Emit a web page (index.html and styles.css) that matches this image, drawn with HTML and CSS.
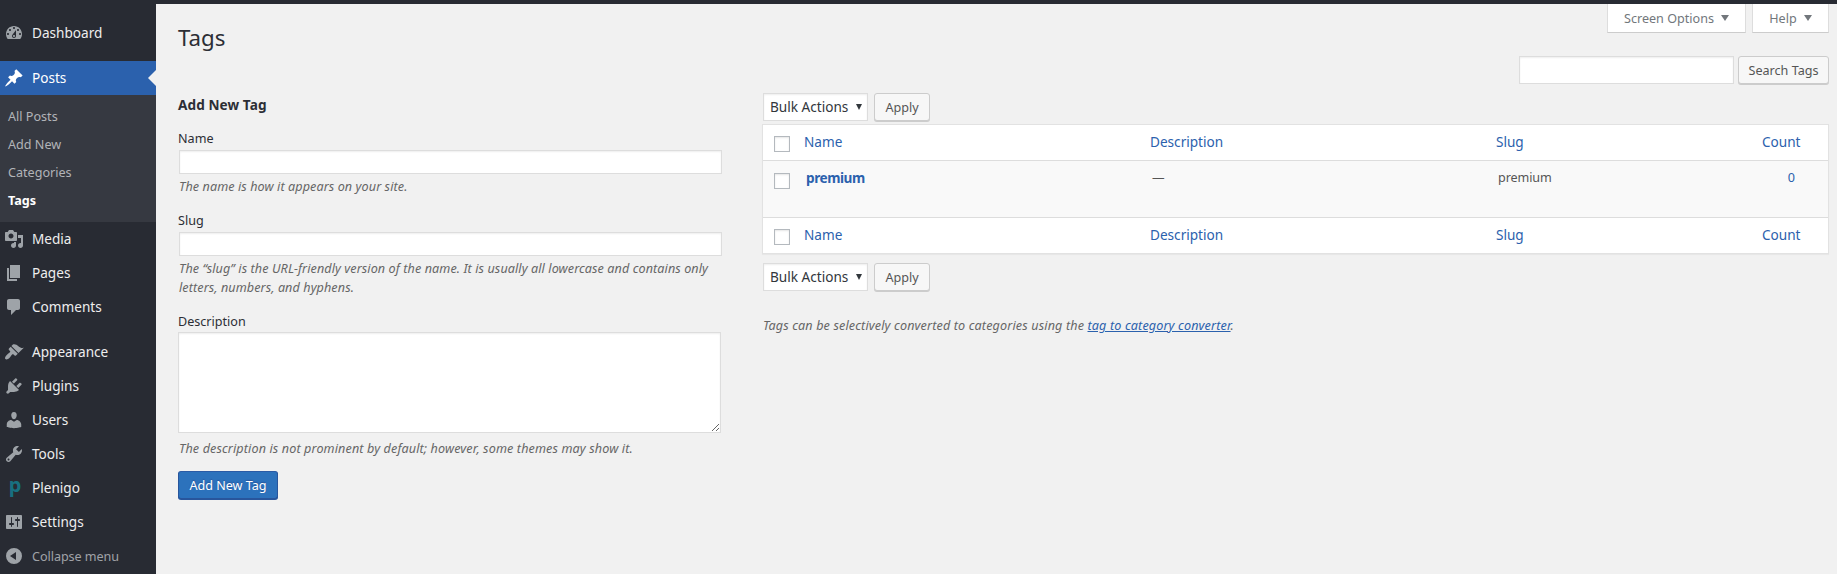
FILE: index.html
```
<!DOCTYPE html>
<html lang="en">
<head>
<meta charset="utf-8">
<title>Tags</title>
<link rel="stylesheet" href="styles.css">
</head>
<body>
<div class="topbar"></div>
<div class="layout">
  <nav class="menu">
    <a class="item"><svg class="icon" viewBox="0 0 20 20"><path d="M3.76 16h12.48c1.1-1.37 1.76-3.11 1.76-5 0-4.42-3.58-8-8-8s-8 3.58-8 8c0 1.89.66 3.63 1.76 5zM10 4c.55 0 1 .45 1 1s-.45 1-1 1-1-.45-1-1 .45-1 1-1zM6 6c.55 0 1 .45 1 1s-.45 1-1 1-1-.45-1-1 .45-1 1-1zm8 0c.55 0 1 .45 1 1s-.45 1-1 1-1-.45-1-1 .45-1 1-1zm-5.37 5.55L12 7v6c0 1.1-.9 2-2 2s-2-.9-2-2c0-.57.24-1.08.63-1.45zM4 10c.55 0 1 .45 1 1s-.45 1-1 1-1-.45-1-1 .45-1 1-1zm12 0c.55 0 1 .45 1 1s-.45 1-1 1-1-.45-1-1 .45-1 1-1zm-5 3c0-.55-.45-1-1-1s-1 .45-1 1 .45 1 1 1 1-.45 1-1z" fill-rule="evenodd"/></svg><span>Dashboard</span></a>
    <a class="item current gap"><svg class="icon" viewBox="0 0 20 20"><path d="M10.44 3.02l1.82-1.82 6.36 6.35-1.83 1.82c-1.05-.68-2.48-.57-3.41.36l-.75.75c-.92.93-1.04 2.35-.35 3.41l-1.83 1.82-2.41-2.41-2.8 2.79c-.42.42-3.38 2.71-3.8 2.29s1.86-3.39 2.28-3.81l2.79-2.79L4.1 9.36l1.83-1.82c1.05.69 2.48.57 3.4-.36l.75-.75c.93-.92 1.05-2.35.36-3.41z"/></svg><span>Posts</span></a>
    <div class="submenu">
      <a>All Posts</a><a>Add New</a><a>Categories</a><a class="active">Tags</a>
    </div>
    <a class="item"><svg class="icon" viewBox="0 0 20 20"><path d="M13 11V4c0-.55-.45-1-1-1h-1.67L9 1H5L3.67 3H2c-.55 0-1 .45-1 1v7c0 .55.45 1 1 1h10c.55 0 1-.45 1-1zM7 4.5c1.38 0 2.5 1.12 2.5 2.5S8.38 9.5 7 9.5 4.5 8.38 4.5 7 5.62 4.5 7 4.5zM14 6h5v10.5c0 1.38-1.12 2.5-2.5 2.5S14 17.88 14 16.5s1.12-2.5 2.5-2.5c.17 0 .34.02.5.05V9h-3V6zm-4 8.05V13h2v3.5c0 1.38-1.12 2.5-2.5 2.5S7 17.88 7 16.5 8.12 14 9.5 14c.17 0 .34.02.5.05z" fill-rule="evenodd"/></svg><span>Media</span></a>
    <a class="item"><svg class="icon" viewBox="0 0 20 20"><path d="M6 15V2h10v13H6zm-1 1h8v2H3V5h2v11z"/></svg><span>Pages</span></a>
    <a class="item"><svg class="icon" viewBox="0 0 20 20"><path d="M5 2h9c1.1 0 2 .9 2 2v7c0 1.1-.9 2-2 2h-2l-5 5v-5H5c-1.1 0-2-.9-2-2V4c0-1.1.9-2 2-2z"/></svg><span>Comments</span></a>
    <a class="item gap"><svg class="icon" viewBox="0 0 20 20"><path d="M14.48 11.06L7.41 3.99l1.5-1.5c.5-.56 2.3-.47 3.51.32 1.21.8 1.43 1.28 2.91 2.1 1.18.64 2.45 1.26 4.45.85zm-.71.71L6.7 4.7 4.93 6.47c-.39.39-.39 1.02 0 1.41l1.06 1.06c.39.39.39 1.03 0 1.42-.6.6-1.43 1.11-2.21 1.69-.35.26-.7.53-1.01.84C1.43 14.23.4 16.08 1.4 17.07c.99 1 2.84-.03 4.18-1.36.31-.31.58-.66.85-1.02.57-.78 1.08-1.61 1.69-2.21.39-.39 1.02-.39 1.41 0l1.06 1.06c.39.39 1.02.39 1.41 0z"/></svg><span>Appearance</span></a>
    <a class="item"><svg class="icon" viewBox="0 0 20 20"><path d="M13.11 4.36L9.87 7.6 8 5.73l3.24-3.24c.35-.34 1.05-.2 1.56.32.52.51.66 1.21.31 1.55zm-8 1.77l.91-1.12 9.01 9.01-1.19.84c-.71.71-2.63 1.16-3.82 1.16H6.14L4.9 17.26c-.59.59-1.54.59-2.12 0-.59-.58-.59-1.53 0-2.12l1.24-1.24v-3.88c0-1.13.4-3.19 1.09-3.89zm7.26 3.97l3.24-3.24c.34-.35 1.04-.21 1.55.31.52.51.66 1.21.31 1.55l-3.24 3.25z"/></svg><span>Plugins</span></a>
    <a class="item"><svg class="icon" viewBox="0 0 20 20"><path d="M10 9.25c-2.27 0-2.73-3.44-2.73-3.44C7 4.02 7.82 2 9.97 2c2.16 0 2.98 2.02 2.71 3.81 0 0-.41 3.44-2.68 3.44zm0 2.57L12.72 10c2.39 0 4.52 2.33 4.52 4.53v2.49s-3.65 1.13-7.24 1.13c-3.65 0-7.24-1.13-7.24-1.13v-2.49c0-2.25 1.94-4.48 4.47-4.48z"/></svg><span>Users</span></a>
    <a class="item"><svg class="icon" viewBox="0 0 20 20"><path d="M16.68 9.77c-1.34 1.34-3.3 1.67-4.95.99l-5.41 6.52c-.99.99-2.59.99-3.58 0s-.99-2.59 0-3.57l6.52-5.42c-.68-1.65-.35-3.61.99-4.95 1.28-1.28 3.12-1.62 4.72-1.06l-2.89 2.89 2.82 2.82 2.86-2.87c.53 1.58.18 3.39-1.08 4.65zM3.81 16.21c.4.39 1.04.39 1.43 0 .4-.4.4-1.04 0-1.43-.39-.4-1.03-.4-1.43 0-.39.39-.39 1.03 0 1.43z" fill-rule="evenodd"/></svg><span>Tools</span></a>
    <a class="item"><b class="icon plenigo">p</b><span>Plenigo</span></a>
    <a class="item"><svg class="icon" viewBox="0 0 20 20"><path d="M18 16V4c0-.55-.45-1-1-1H3c-.55 0-1 .45-1 1v12c0 .55.45 1 1 1h14c.55 0 1-.45 1-1zM8 11h1c.55 0 1 .45 1 1s-.45 1-1 1H8v1.5c0 .28-.22.5-.5.5s-.5-.22-.5-.5V13H6c-.55 0-1-.45-1-1s.45-1 1-1h1V5.5c0-.28.22-.5.5-.5s.5.22.5.5V11zm5-2h-1c-.55 0-1-.45-1-1s.45-1 1-1h1V5.5c0-.28.22-.5.5-.5s.5.22.5.5V7h1c.55 0 1 .45 1 1s-.45 1-1 1h-1v5.5c0 .28-.22.5-.5.5s-.5-.22-.5-.5V9z" fill-rule="evenodd"/></svg><span>Settings</span></a>
    <a class="item collapse"><svg class="icon" viewBox="0 0 20 20"><path d="M10 2a8 8 0 1 0 0 16 8 8 0 0 0 0-16zM12 6v8l-6-4z" fill-rule="evenodd"/></svg><span>Collapse menu</span></a>
  </nav>

  <main class="content">
    <header class="head">
      <h1>Tags</h1>
      <div class="screen-links">
        <a class="screen-tab options">Screen Options<svg viewBox="0 0 8 6"><path d="M0 0h8L4 6z"/></svg></a>
        <a class="screen-tab help">Help<svg viewBox="0 0 8 6"><path d="M0 0h8L4 6z"/></svg></a>
      </div>
    </header>
    <div class="search">
      <input class="field search-field" type="text">
      <button class="button search-button">Search Tags</button>
    </div>

    <div class="columns">
      <form class="add-form">
        <h2>Add New Tag</h2>
        <label>Name</label>
        <input class="field" type="text">
        <p class="hint name-hint">The name is how it appears on your site.</p>
        <label>Slug</label>
        <input class="field" type="text">
        <p class="hint slug-hint">The “slug” is the URL-friendly version of the name. It is usually all lowercase and contains only<br>letters, numbers, and hyphens.</p>
        <label class="area-label">Description</label>
        <textarea class="field area"></textarea>
        <p class="hint area-hint">The description is not prominent by default; however, some themes may show it.</p>
        <button class="button primary" type="button">Add New Tag</button>
      </form>

      <section class="list">
        <div class="bulk">
          <div class="select"><span>Bulk Actions</span><svg viewBox="0 0 6 6"><path d="M0 0h6L3 6z"/></svg></div>
          <button class="button apply">Apply</button>
        </div>
        <div class="table">
          <div class="row title-row"><i class="check"></i><a>Name</a><a>Description</a><a>Slug</a><a class="count">Count</a></div>
          <div class="row data-row"><i class="check"></i><a class="tag-name">premium</a><span class="dash">—</span><span class="slug">premium</span><a class="count">0</a></div>
          <div class="row title-row foot"><i class="check"></i><a>Name</a><a>Description</a><a>Slug</a><a class="count">Count</a></div>
        </div>
        <div class="bulk bottom">
          <div class="select"><span>Bulk Actions</span><svg viewBox="0 0 6 6"><path d="M0 0h6L3 6z"/></svg></div>
          <button class="button apply">Apply</button>
        </div>
        <p class="note">Tags can be selectively converted to categories using the <a>tag to category converter</a>.</p>
      </section>
    </div>
  </main>
</div>
</body>
</html>
```
FILE: styles.css
```
* { box-sizing: border-box; }
body {
  margin: 0;
  height: 574px;
  overflow: hidden;
  background: #f1f1f1;
  color: #2c2e35;
  font: 12.6px/19px "Noto Sans", "Open Sans", sans-serif;
}
h1, h2, p { margin: 0; }
.topbar { height: 4px; background: #282b33; }
.layout { display: flex; height: 570px; }

.menu { width: 156px; flex: none; padding-top: 12px; background: #282b33; }
.item {
  position: relative;
  display: flex;
  align-items: center;
  height: 34px;
  padding-left: 4px;
  gap: 8px;
  color: #eee;
  font-size: 13.6px;
}
.item span { padding-bottom: 2px; }
.icon { width: 20px; height: 20px; flex: none; fill: #9ea3a8; }
.gap { margin-top: 11px; }
.current { background: #2b61ad; color: #fff; }
.current .icon { fill: #fff; }
.current::after {
  content: "";
  position: absolute;
  right: 0;
  top: 9px;
  border: 8px solid transparent;
  border-left-width: 0;
  border-right-color: #f1f1f1;
}
.submenu { height: 127px; padding: 8px 8px 7px; background: #363941; }
.submenu a { display: block; height: 28px; line-height: 28px; color: #b2b4b8; }
.submenu .active { color: #fff; font-weight: 700; }
.plenigo {
  font-size: 20px;
  line-height: 14px;
  text-align: center;
  color: #187080;
  padding-left: 2px;
}
.item.collapse { color: #a0a3a8; font-size: 12.6px; letter-spacing: -.05px; }
.collapse span { padding-bottom: 0; }

.content { flex: 1; padding: 0 8px 0 22px; }
.head { display: flex; justify-content: space-between; height: 52px; }
h1 { margin-top: 19px; font-size: 22.3px; font-weight: 400; line-height: 29px; }
.screen-links { display: flex; gap: 6px; }
.screen-tab {
  display: flex;
  justify-content: center;
  align-items: center;
  gap: 7px;
  height: 29px;
  border: 1px solid #ddd;
  border-top: 0;
  border-bottom-color: #ccc;
  background: #fff;
  color: #72777c;
}
.screen-tab svg { width: 8px; height: 6px; fill: #72777c; }
.options { width: 139px; }
.help { width: 77px; }

.field {
  display: block;
  border: 1px solid #ddd;
  border-radius: 0;
  background: #fff;
  box-shadow: inset 0 1px 2px rgba(0,0,0,.07);
}
.button {
  height: 28px;
  padding: 1px 0 0;
  border: 1px solid #ccc;
  border-radius: 3px;
  background: #f7f7f7;
  box-shadow: 0 1px 0 #ccc;
  color: #555;
  font: 12.6px/25px "Noto Sans", "Open Sans", sans-serif;
}
.search { display: flex; justify-content: flex-end; gap: 4px; }
.search-field { width: 215px; height: 28px; }
.search-button { width: 91px; }

.columns { display: flex; gap: 41px; }
.add-form { width: 544px; padding-top: 12px; }
.add-form h2 { font-size: 13.6px; line-height: 18px; font-weight: 700; margin-bottom: 15px; letter-spacing: .08px; }
.add-form label { display: block; height: 21px; }
.add-form .area-label { padding-top: 1px; }
.add-form .field { width: 543px; height: 24px; margin-left: 1px; }
.hint { padding-left: 1px; color: #666; font-style: italic; letter-spacing: .09px; }
.name-hint { padding-top: 3px; margin-bottom: 15px; }
.slug-hint { padding-top: 3px; margin-bottom: 14px; }
.add-form .area { height: 101px; margin: 0; }
.area-hint { padding-top: 6px; letter-spacing: .12px; }
.primary {
  width: 100px;
  margin-top: 13px;
  border-color: #2a5ba5 #28559c #28559c;
  background: #2c72bc;
  box-shadow: 0 1px 0 #28559c;
  color: #fff;
  text-shadow: 0 -1px 1px #28559c;
}

.list { flex: 1; padding-top: 9px; }
.bulk { display: flex; gap: 6px; }
.select {
  display: flex;
  align-items: center;
  justify-content: space-between;
  width: 105px;
  height: 28px;
  padding: 0 5px 0 6px;
  border: 1px solid #ddd;
  background: #fff;
  box-shadow: inset 0 1px 2px rgba(0,0,0,.07);
  color: #32373c;
  font-size: 13.6px;
}
.select span { padding-bottom: 2px; }
.select svg { width: 6px; height: 6px; fill: #32373c; }
.apply { width: 56px; }
.table {
  margin-top: 3px;
  width: 1067px;
  margin-left: -1px;
  border: 1px solid #e2e2e2;
  background: #fff;
  box-shadow: 0 1px 1px rgba(0,0,0,.04);
}
.row {
  display: grid;
  grid-template-columns: 30px 346px 346px 266px 38px;
  padding: 7px 0 0 11px;
  height: 35px;
}
.row a { color: #2b61ad; }
.title-row { font-size: 13.6px; }
.data-row { height: 58px; border-top: 1px solid #ddd; border-bottom: 1px solid #ddd; background: #f9f9f9; }
.check { width: 16px; height: 16px; margin-top: 4px; border: 1px solid #b4b9be; background: #fff; box-shadow: inset 0 1px 2px rgba(0,0,0,.1); }
.data-row .check { margin-top: 5px; }
.row .tag-name { padding-left: 2px; font-size: 13.6px; font-weight: 700; letter-spacing: -.45px; }
.dash, .slug { padding-left: 2px; color: #555; letter-spacing: -.1px; }
.row .count { text-align: right; }
.data-row .count { padding-right: 5px; }
.bottom { margin-top: 9px; }
.note { margin-top: 25px; color: #666; font-style: italic; letter-spacing: .14px; }
.note a { color: #2b61ad; text-decoration: underline; }
```
